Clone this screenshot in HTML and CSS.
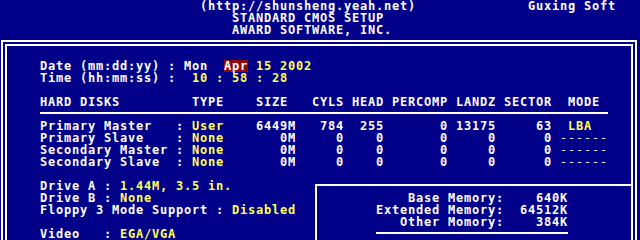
FILE: index.html
```html
<!DOCTYPE html>
<html lang="en">
<head>
  <meta charset="UTF-8">
  <title>Standard CMOS Setup</title>
  <link rel="stylesheet" href="styles.css">
</head>
<body>

  <!-- Title lines -->
  <div class="header">
    <div class="row">                         (http://shunsheng.yeah.net)              Guxing Soft</div>
    <div class="row">                             STANDARD CMOS SETUP</div>
    <div class="row">                             AWARD SOFTWARE, INC.</div>
  </div>

  <!-- Double frame -->
  <div class="frame">
    <div class="row">Date (mm:dd:yy) : Mon  <span class="hilite">Apr</span><span class="val"> 15 2002</span></div>
    <div class="row">Time (hh:mm:ss) :  <span class="val">10 : 58 : 28</span></div>
    <div class="row"></div>
    <div class="row">HARD DISKS         TYPE    SIZE   CYLS HEAD PERCOMP LANDZ SECTOR  MODE</div>
    <div class="rule-row"><div class="rule"></div></div>
    <div class="row">Primary Master   : <span class="val">User</span>    6449M   784  255       0 13175     63  <span class="val">LBA</span></div>
    <div class="row">Primary Slave    : <span class="val">None</span>       0M     0    0       0     0      0 <span class="dash">------</span></div>
    <div class="row">Secondary Master : <span class="val">None</span>       0M     0    0       0     0      0 <span class="dash">------</span></div>
    <div class="row">Secondary Slave  : <span class="val">None</span>       0M     0    0       0     0      0 <span class="dash">------</span></div>
    <div class="row"></div>

    <div class="lower">
      <div class="drives">
        <div class="row">Drive A : <span class="val">1.44M, 3.5 in.</span></div>
        <div class="row">Drive B : <span class="val">None</span></div>
        <div class="row">Floppy 3 Mode Support : <span class="val">Disabled</span></div>
        <div class="row"></div>
        <div class="row">Video   : <span class="val">EGA/VGA</span></div>
      </div>

      <div class="memory">
        <div class="row">    Base Memory:    640K</div>
        <div class="row">Extended Memory:  64512K</div>
        <div class="row">   Other Momory:    384K</div>
        <div class="rule-row"><div class="mem-rule"></div></div>
      </div>
    </div>
  </div>

</body>
</html>
```

FILE: styles.css
```css
:root {
  --bios-blue: #000088;
  --bios-white: #ffffff;
  --bios-yellow: #ffff55;
  --bios-red: #920808;
}

html, body {
  margin: 0;
  height: 100%;
  overflow: hidden;
}

body {
  background: var(--bios-blue);
  color: var(--bios-white);
  font-family: "DejaVu Sans Mono", "Liberation Mono", monospace;
  font-weight: bold;
  font-size: 12px;
  letter-spacing: 0.7754px; /* 8px character cells */
}

.row {
  height: 12px;
  line-height: 12px;
  white-space: pre;
}

.header {
  height: 36px;
}

.frame {
  box-sizing: border-box;
  width: 636px;
  height: 400px;
  margin: 4px 0 0 1px;
  border: 6px double var(--bios-white);
  padding: 14px 0 0 33px;
}

.val {
  color: var(--bios-yellow);
}

.hilite {
  display: inline-block;
  height: 12px;
  vertical-align: top;
  background: var(--bios-red);
  color: var(--bios-white);
}

.dash {
  font-weight: normal;
}

/* single line drawn through the middle of a text row */
.rule-row {
  box-sizing: border-box;
  height: 12px;
  padding-top: 4px;
}

.rule {
  width: 568px;
  height: 2px;
  background: var(--bios-white);
}

.lower {
  display: flex;
  align-items: flex-start;
  margin-left: -33px;
}

.drives {
  width: 275px;
  padding-left: 33px;
}

.memory {
  flex: 1;
  height: 200px;
  margin-top: 4px;
  padding: 6px 0 0 59px;
  border-top: 2px solid var(--bios-white);
  border-left: 2px solid var(--bios-white);
}

.mem-rule {
  width: 192px;
  height: 2px;
  background: var(--bios-white);
}
```
